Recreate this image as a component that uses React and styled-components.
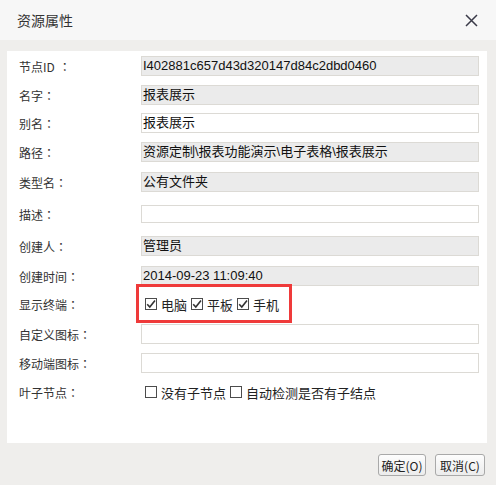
import React from "react";
import styled, { createGlobalStyle } from "styled-components";

const Global = createGlobalStyle`
  html, body { margin: 0; padding: 0; background: #efeeec; }
  body { font-family: "Liberation Sans", "Noto Sans CJK SC", sans-serif; color: #333; }
`;

const Dialog = styled.div`
  width: 496px;
  height: 485px;
  display: flex;
  flex-direction: column;
  background: #efeeec;
  overflow: hidden;
`;

const Header = styled.div`
  height: 40px;
  flex: none;
  background: #f7f7f7;
  display: flex;
  align-items: center;
  justify-content: space-between;
  padding: 0 18px 0 17px;
`;

const Title = styled.div`
  font-family: "Noto Sans CJK SC", sans-serif;
  font-size: 14px;
  color: #333;
`;

const Close = styled.button`
  border: 0;
  background: none;
  padding: 0;
  width: 13px;
  height: 13px;
  display: flex;
  cursor: pointer;
`;

const Body = styled.div`
  padding: 11px 9px 0 7px;
`;

const Panel = styled.div`
  background: #fff;
  height: 392px;
  box-sizing: border-box;
  padding: 5px 8px 0 12px;
  display: flex;
  flex-direction: column;
`;

const Row = styled.div`
  position: relative;
  display: grid;
  grid-template-columns: 122px 338px;
  align-items: center;
  height: ${(p) => p.$h || 20}px;
  margin-top: ${(p) => p.$mt || 0}px;
`;

const Label = styled.div`
  font-family: "Noto Sans CJK SC", sans-serif;
  font-size: 12px;
  color: #333;
  white-space: nowrap;
`;

const Colon = styled.span`
  font-family: "Noto Sans CJK TC", sans-serif;
  margin-left: ${(p) => p.$ml || 0}px;
`;

const Field = styled.div`
  box-sizing: border-box;
  height: ${(p) => p.$h || 20}px;
  border: 1px solid #dcdad5;
  background: ${(p) => (p.$ro ? "#ebebeb" : "#fff")};
  font-family: "Liberation Sans", "Noto Sans CJK SC", sans-serif;
  font-size: 13px;
  line-height: 18px;
  color: #111;
  padding-left: 1px;
  white-space: nowrap;
  overflow: hidden;
`;

const Checks = styled.div`
  display: flex;
  align-items: center;
  padding-left: 4px;
  font-family: "Noto Sans CJK SC", sans-serif;
  font-size: 13px;
  color: #222;
`;

const CheckItem = styled.label`
  display: flex;
  align-items: center;
  margin-right: 4px;
  gap: 4px;
`;

const Box = styled.span`
  box-sizing: border-box;
  width: 12px;
  height: 12px;
  border: 1px solid #4c4c4c;
  background: #fff;
  display: inline-flex;
  align-items: center;
  justify-content: center;
`;

const Highlight = styled.div`
  position: absolute;
  left: 117px;
  top: -10px;
  width: 156px;
  height: 39px;
  box-sizing: border-box;
  border: 3px solid #ef3a3a;
  pointer-events: none;
`;

const Footer = styled.div`
  display: flex;
  justify-content: flex-end;
  gap: 9px;
  padding: 11px 11px 0 0;
`;

const Button = styled.button`
  box-sizing: border-box;
  height: 22px;
  width: ${(p) => p.$w}px;
  padding: 0;
  border: 1px solid #a9a9a9;
  border-radius: 3px;
  background: linear-gradient(#fdfdfd, #ececec);
  font-family: "Noto Sans CJK SC", sans-serif;
  font-size: 12px;
  color: #222;
`;

function Check({ checked, children }) {
  return (
    <CheckItem>
      <Box>
        {checked && (
          <svg width="10" height="10" viewBox="0 0 10 10">
            <path d="M1.2 5.2 L3.8 8 L9 1.5" fill="none" stroke="#333" strokeWidth="1.6" />
          </svg>
        )}
      </Box>
      {children}
    </CheckItem>
  );
}

function L({ children, ml }) {
  return (
    <Label>
      {children}
      <Colon $ml={ml}>：</Colon>
    </Label>
  );
}

export default function App() {
  return (
    <>
      <Global />
      <Dialog>
        <Header>
          <Title>资源属性</Title>
          <Close aria-label="close">
            <svg width="13" height="13" viewBox="0 0 13 13">
              <path d="M1 1 L12 12 M12 1 L1 12" stroke="#3a3a48" strokeWidth="1.5" />
            </svg>
          </Close>
        </Header>
        <Body>
          <Panel>
            <Row>
              <L ml={4}>节点ID</L>
              <Field $ro>I402881c657d43d320147d84c2dbd0460</Field>
            </Row>
            <Row $mt={9}>
              <L>名字</L>
              <Field $ro>报表展示</Field>
            </Row>
            <Row $mt={8}>
              <L>别名</L>
              <Field>报表展示</Field>
            </Row>
            <Row $mt={9}>
              <L>路径</L>
              <Field $ro>资源定制\报表功能演示\电子表格\报表展示</Field>
            </Row>
            <Row $mt={10}>
              <L>类型名</L>
              <Field $ro>公有文件夹</Field>
            </Row>
            <Row $mt={13} $h={18}>
              <L>描述</L>
              <Field $h={18}></Field>
            </Row>
            <Row $mt={13}>
              <L>创建人</L>
              <Field $ro>管理员</Field>
            </Row>
            <Row $mt={10}>
              <L>创建时间</L>
              <Field $ro>2014-09-23 11:09:40</Field>
            </Row>
            <Row $mt={8}>
              <L>显示终端</L>
              <Checks>
                <Check checked>电脑</Check>
                <Check checked>平板</Check>
                <Check checked>手机</Check>
              </Checks>
              <Highlight />
            </Row>
            <Row $mt={10}>
              <L>自定义图标</L>
              <Field></Field>
            </Row>
            <Row $mt={9}>
              <L>移动端图标</L>
              <Field></Field>
            </Row>
            <Row $mt={9}>
              <L>叶子节点</L>
              <Checks>
                <Check>没有子节点</Check>
                <Check>自动检测是否有子结点</Check>
              </Checks>
            </Row>
          </Panel>
        </Body>
        <Footer>
          <Button $w={48}>确定(O)</Button>
          <Button $w={50}>取消(C)</Button>
        </Footer>
      </Dialog>
    </>
  );
}
